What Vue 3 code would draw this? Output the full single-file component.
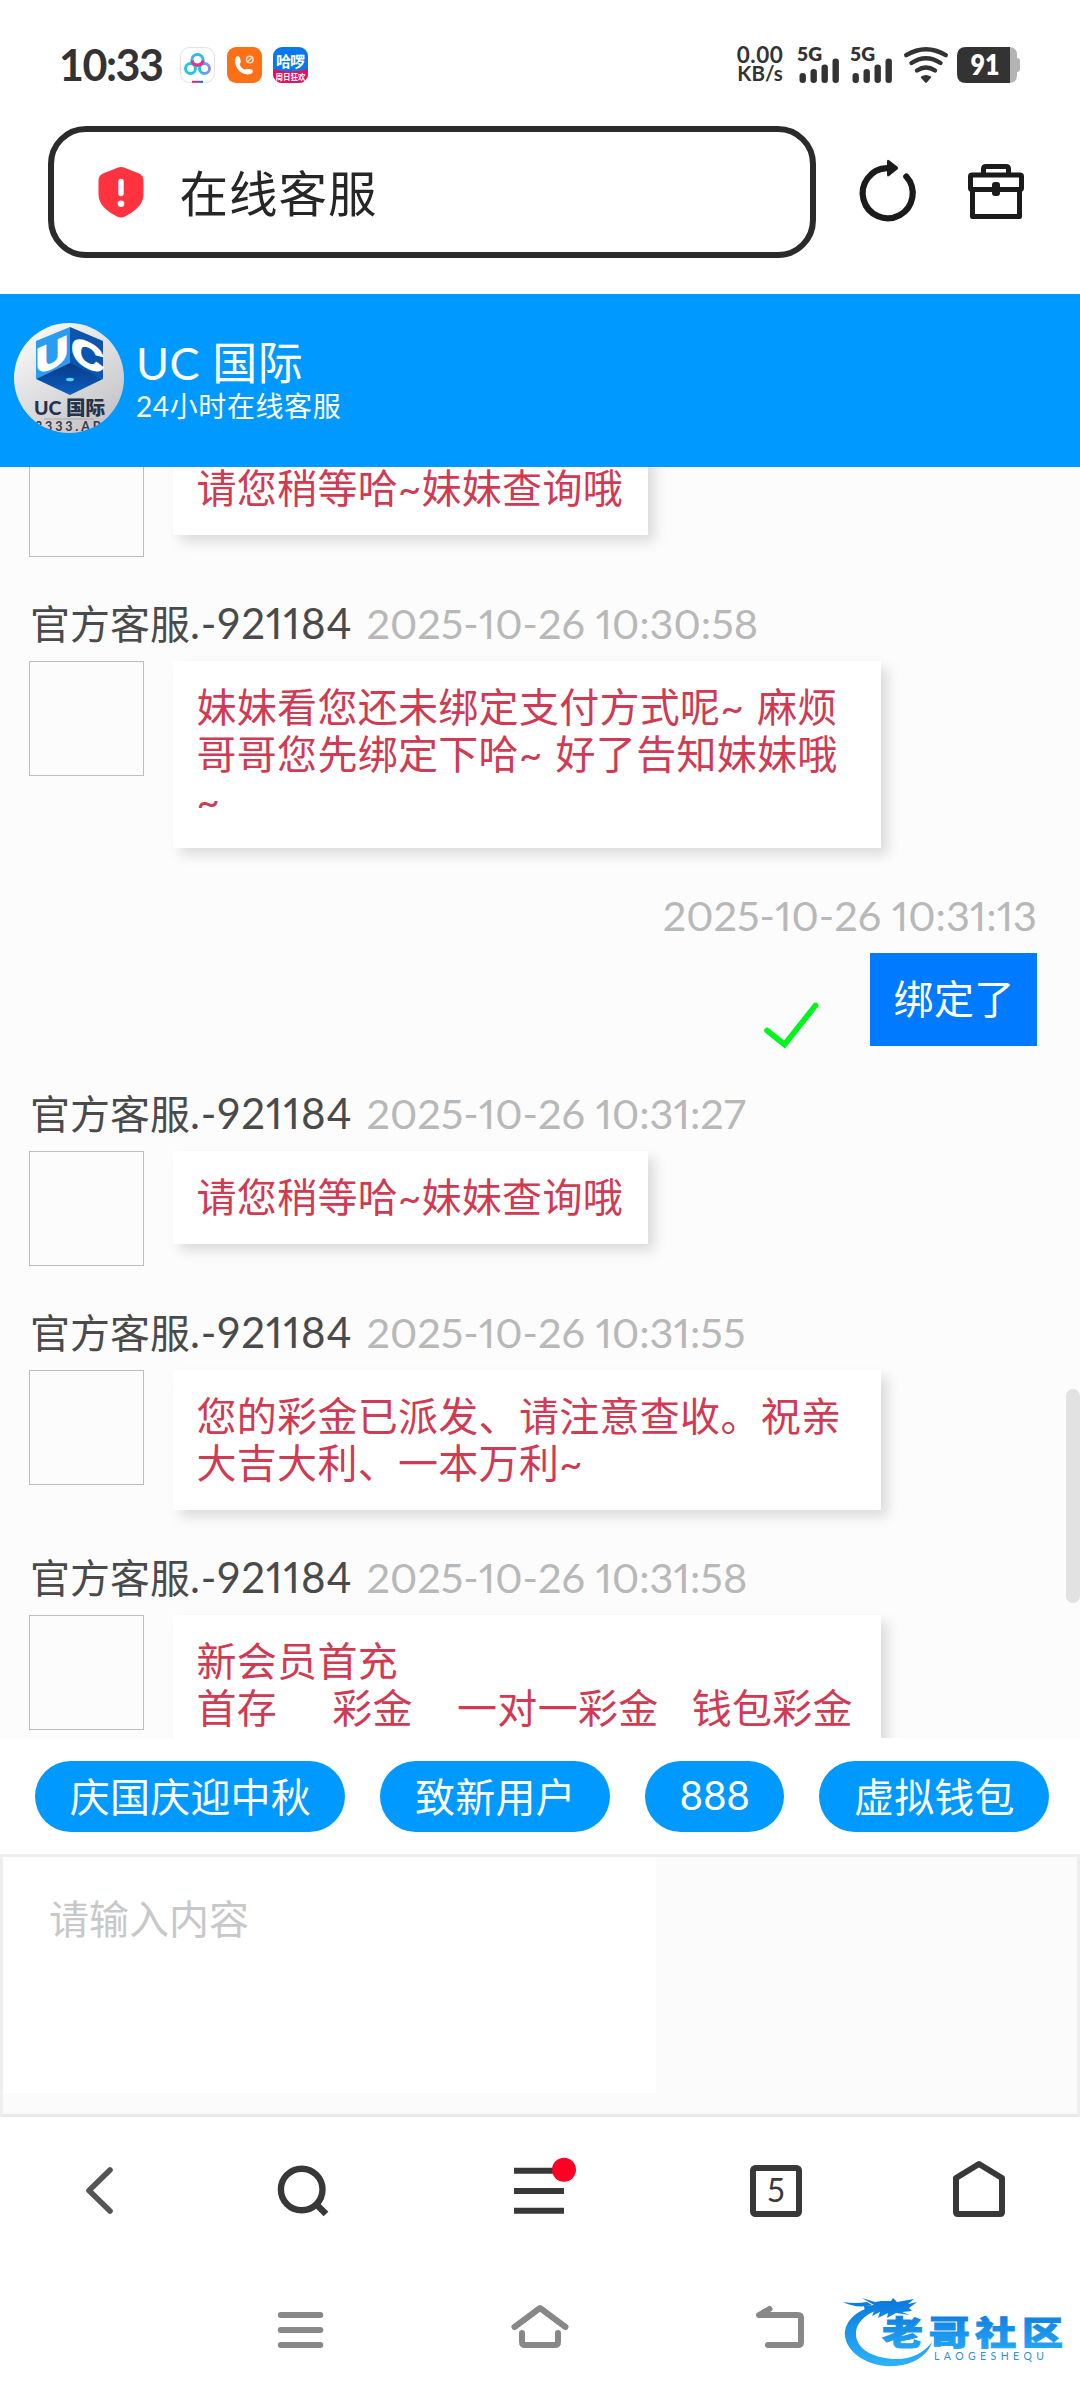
<script setup>
import { ref } from 'vue'

const agent = { title: '官方客服', id: '.-921184' }

const messages = ref([
  { id: 1, from: agent, time: '2025-10-26 10:30:41', text: '请您稍等哈~妹妹查询哦' },
  { id: 2, from: agent, time: '2025-10-26 10:30:58', text: '妹妹看您还未绑定支付方式呢~ 麻烦\n哥哥您先绑定下哈~ 好了告知妹妹哦\n~', wide: true },
  { id: 3, mine: true, time: '2025-10-26 10:31:13', text: '绑定了' },
  { id: 4, from: agent, time: '2025-10-26 10:31:27', text: '请您稍等哈~妹妹查询哦' },
  { id: 5, from: agent, time: '2025-10-26 10:31:55', text: '您的彩金已派发、请注意查收。祝亲\n大吉大利、一本万利~', wide: true },
  { id: 6, from: agent, time: '2025-10-26 10:31:58', text: '新会员首充\n首存     彩金    一对一彩金   钱包彩金', wide: true, columns: true },
])

const quickReplies = ['庆国庆迎中秋', '致新用户', '888', '虚拟钱包']
const draft = ref('')
</script>

<template>
  <div class="phone">
    <!-- status bar -->
    <div class="status">
      <span class="clock">10:33</span>
      <div class="apps">
        <svg width="35" height="36" viewBox="0 0 35 36">
          <defs>
            <linearGradient id="cloud" x1="0" x2="1">
              <stop offset="0" stop-color="#19c3e6" />
              <stop offset="1" stop-color="#8b8fe8" />
            </linearGradient>
          </defs>
          <rect x=".5" y=".5" width="34" height="35" rx="9" fill="#fff" stroke="#e2e2e6" />
          <circle cx="17.500" cy="13" r="5.600" fill="none" stroke="#35b9ea" stroke-width="3" />
          <circle cx="10.500" cy="21.500" r="5" fill="none" stroke="#22c7df" stroke-width="3" />
          <circle cx="24.500" cy="21.500" r="5" fill="none" stroke="url(#cloud)" stroke-width="3" />
          <path d="M12 13.500a5.600 5.600 0 0 0 11 0" fill="none" stroke="#e8308c" stroke-width="3.200" />
          <path d="M12 34.800h6" stroke="#e5255f" stroke-width="2" />
          <path d="M18 34.800h5" stroke="#2468d8" stroke-width="2" />
        </svg>
        <svg width="35" height="36" viewBox="0 0 35 36">
          <rect width="35" height="36" rx="9" fill="#ff6f16" />
          <path d="M8.500 10.500c1.500-2 4-1.500 4.500.5l.8 3.500c.2 1.200-1.200 2-1 3 .6 2.200 2.200 4 4.600 5 1 .4 2-.9 3.200-.7l4 .8c2 .6 1.600 3.600-.8 4.400C16 29.500 6 21.500 8.500 10.500z" fill="#fff" />
          <circle cx="22.800" cy="12.600" r="3.300" fill="none" stroke="#ffe0cc" stroke-width="1.400" />
          <path d="M20.600 14.800l4.400-4.400" stroke="#ffe0cc" stroke-width="1.400" />
        </svg>
        <svg width="35" height="36" viewBox="0 0 35 36">
          <defs>
            <clipPath id="hello"><rect width="35" height="36" rx="9" /></clipPath>
          </defs>
          <g clip-path="url(#hello)">
            <rect width="35" height="36" fill="#0a78ea" />
            <path d="M0 22q17 5 35 0v14H0z" fill="#e80d5e" />
            <text x="3" y="19.500" textLength="29" font-size="15" font-weight="700" fill="#fff">哈啰</text>
            <text x="2.500" y="33" textLength="30" lengthAdjust="spacingAndGlyphs" font-size="8" font-weight="700" fill="#fff">周日狂欢</text>
          </g>
        </svg>
      </div>
      <div class="speed">
        <span>0.00</span>
        <span>KB/s</span>
      </div>
      <svg v-for="n in 2" :key="n" class="signal" width="43" height="36" viewBox="0 0 43 36">
        <text x="-1" y="14" textLength="25" lengthAdjust="spacingAndGlyphs" font-size="19" font-weight="800" fill="#333">5G</text>
        <g fill="#333">
          <rect x="1.500" y="26" width="6.400" height="10" rx="3" />
          <rect x="12.500" y="22" width="6.400" height="14" rx="3" />
          <rect x="23.500" y="17.500" width="6.400" height="18.500" rx="3" />
          <rect x="34.500" y="11.500" width="6.400" height="24.500" rx="3" />
        </g>
      </svg>
      <svg class="wifi" width="44" height="36" viewBox="0 0 44 36">
        <g fill="none" stroke="#333" stroke-width="4.400" stroke-linecap="round">
          <path d="M2.200 8.200Q22-3.800 41.800 8.200" />
          <path d="M7.500 16Q22 6.500 36.500 16" />
          <path d="M13 23.500Q22 17.500 31 23.500" />
        </g>
        <path d="M17 29.500q5-3 10 0 .4 1-.4 1.800L22.800 35.600q-.8.7-1.600 0L17.400 31.300q-.8-.8-.4-1.800z" fill="#333" />
      </svg>
      <svg width="63" height="36" viewBox="0 0 63 36">
        <path d="M50 0h2q8 0 8 8v3q3 0 3 3v8q0 3-3 3v3q0 8-8 8h-2z" fill="#b3b3b3" />
        <path d="M9 0h44v36H9q-9 0-9-9V9q0-9 9-9z" fill="#333" />
        <text x="28" y="28" text-anchor="middle" textLength="29" lengthAdjust="spacingAndGlyphs" font-size="28" font-weight="800" fill="#fff">91</text>
      </svg>
    </div>

    <!-- address bar -->
    <div class="address">
      <div class="box">
        <svg width="48" height="52" viewBox="0 0 48 52">
          <path d="M20.500 1.800q3.500-1.500 7 0L42 7.500q4.500 2 4.500 7V28c0 11-9 17.500-18.500 22.500q-4 2-8 0C10.500 45.500 1.500 39 1.500 28V14.500q0-5 4.500-7z" fill="#ff3340" />
          <path d="M24 15.500v12" stroke="#fff" stroke-width="5.400" stroke-linecap="round" />
          <circle cx="24" cy="37.800" r="3.300" fill="#fff" />
        </svg>
        <span>在线客服</span>
      </div>
      <svg class="reload" width="58" height="64" viewBox="0 0 58 64">
        <path d="M47.300 17.500A25 25 0 1 1 28 9.200" fill="none" stroke="#1b1b1b" stroke-width="6.200" stroke-linecap="round" />
        <path d="M28 2.500q0-2.600 2.200-1.200l8.300 6.500q1.400 1.200 0 2.400l-8.300 6.800q-2.200 1.300-2.200-1.200z" fill="#1b1b1b" />
      </svg>
      <svg width="58" height="58" viewBox="0 0 58 58">
        <g fill="none" stroke="#1b1b1b" stroke-width="5" stroke-linejoin="round">
          <path d="M16.500 11V6q0-2.500 2.500-2.500h20q2.500 0 2.500 2.500v5" />
          <rect x="3.500" y="12" width="51" height="14.500" rx="1.500" />
          <path d="M5.500 27v26.500h47V27" />
        </g>
        <rect x="25" y="19" width="8" height="14" rx="3" fill="#1b1b1b" />
      </svg>
    </div>

    <!-- chat header -->
    <header class="chat-head">
      <svg width="110" height="110" viewBox="0 0 110 110">
        <defs>
          <clipPath id="round"><circle cx="55" cy="55" r="55" /></clipPath>
          <linearGradient id="silver" x1="0" y1="0" x2=".7" y2="1">
            <stop offset="0" stop-color="#fff" />
            <stop offset="1" stop-color="#c4c4c8" />
          </linearGradient>
          <linearGradient id="base" x1="0" y1="0" x2="0" y2="1">
            <stop offset="0" stop-color="#063a86" />
            <stop offset="1" stop-color="#0d5fc0" />
          </linearGradient>
        </defs>
        <g clip-path="url(#round)">
          <rect width="110" height="110" fill="url(#silver)" />
          <path d="M22 18L56 4v38L22 56z" fill="#2a9df2" />
          <path d="M56 4l33 14v38L56 42z" fill="#0a55ad" />
          <path d="M56 40l33 16-33 16-34-16z" fill="url(#base)" />
          <ellipse cx="56" cy="56.500" rx="4" ry="1.800" fill="#5fd0ff" />
          <g class="cube" font-size="36" font-weight="700" fill="#fff" stroke="#fff" stroke-width="2">
            <text transform="matrix(1 -.46 0 1 22 52)" textLength="32" lengthAdjust="spacingAndGlyphs">U</text>
            <text transform="matrix(1 .46 0 1 57.500 37)" textLength="32" lengthAdjust="spacingAndGlyphs">C</text>
          </g>
          <text x="20" y="92" textLength="71" lengthAdjust="spacingAndGlyphs" font-size="19" font-weight="900" fill="#26324a">UC 国际</text>
          <path d="M30 96h50" stroke="#a9a9ad" stroke-width="1" />
          <text x="21" y="108" textLength="76" font-size="12.500" font-weight="700" fill="#333b48">3333.APP</text>
        </g>
      </svg>
      <div class="head-text">
        <h1>UC 国际</h1>
        <p>24小时在线客服</p>
      </div>
    </header>

    <!-- conversation, scrolled part way down -->
    <main class="chat">
      <div class="thread">
        <section v-for="m in messages" :key="m.id" class="msg" :class="{ mine: m.mine }">
          <div class="meta">
            <span v-if="m.from" class="name">{{ m.from.title }}<span class="number">{{ m.from.id }}</span></span>
            <time>{{ m.time }}</time>
          </div>
          <div class="row">
            <div v-if="!m.mine" class="avatar"></div>
            <svg v-else class="check" width="55" height="46" viewBox="0 0 55 46">
              <path d="M3 28.500L20.500 42.500 51.500 3.500" fill="none" stroke="#00f51a" stroke-width="5.600" stroke-linecap="round" />
            </svg>
            <div class="bubble" :class="{ wide: m.wide, columns: m.columns }">{{ m.text }}</div>
          </div>
        </section>
      </div>
      <div class="scrollbar"></div>
    </main>

    <div class="quick">
      <button v-for="q in quickReplies" :key="q">{{ q }}</button>
    </div>

    <div class="editor">
      <textarea v-model="draft" placeholder="请输入内容"></textarea>
    </div>

    <!-- browser toolbar -->
    <nav class="toolbar">
      <svg width="200" height="80" viewBox="0 0 200 80">
        <path d="M110 20L89 40.500 110 61" fill="none" stroke="#555" stroke-width="5.600" stroke-linecap="round" stroke-linejoin="round" />
      </svg>
      <svg width="206" height="80" viewBox="200 0 206 80">
        <circle cx="301.700" cy="39.500" r="20.800" fill="none" stroke="#383838" stroke-width="6.400" />
        <path d="M316.500 54.500L326 64" stroke="#383838" stroke-width="6.600" />
      </svg>
      <svg width="264" height="80" viewBox="406 0 264 80">
        <path d="M514 20.800h50M514 41h50M514 60.800h50" stroke="#383838" stroke-width="6" />
        <circle cx="564" cy="19.800" r="12" fill="#ff0024" />
      </svg>
      <svg width="206" height="80" viewBox="670 0 206 80">
        <rect x="753" y="18" width="46" height="46" rx="2.500" fill="none" stroke="#383838" stroke-width="6" />
        <text x="776" y="51.500" text-anchor="middle" font-size="32" fill="#383838">5</text>
      </svg>
      <svg width="204" height="80" viewBox="876 0 204 80">
        <path d="M956 28L979 14l23 14v34q0 2-2 2h-42q-2 0-2-2z" fill="none" stroke="#383838" stroke-width="6" stroke-linejoin="round" />
      </svg>
    </nav>

    <!-- android navigation keys -->
    <nav class="keys">
      <svg width="420" height="60" viewBox="0 0 420 60">
        <path d="M280.800 20h39.500M280.800 35h39.500M280.800 50h39.500" stroke="#888" stroke-width="6" stroke-linecap="round" />
      </svg>
      <svg width="240" height="60" viewBox="420 0 240 60">
        <g fill="none" stroke="#888" stroke-width="6" stroke-linecap="round" stroke-linejoin="round">
          <path d="M514.500 32L540 13l25.500 19" />
          <path d="M522 38v9q0 3 3 3h30q3 0 3-3v-9" />
        </g>
      </svg>
      <svg width="160" height="60" viewBox="660 0 160 60">
        <path d="M769.500 14L759 20h39q3 0 3 3v24q0 3-3 3h-30" fill="none" stroke="#888" stroke-width="6" stroke-linecap="round" stroke-linejoin="round" />
      </svg>
      <svg class="mark" width="234" height="90" viewBox="0 0 234 90">
        <defs>
          <linearGradient id="wave" x1="0" y1="10" x2="0" y2="80" gradientUnits="userSpaceOnUse">
            <stop offset="0" stop-color="#0a76dc" />
            <stop offset="1" stop-color="#2cb4fb" />
          </linearGradient>
        </defs>
        <g fill="url(#wave)">
          <path d="M34 20C16 25 7 37 8 49c2 18 26 32 49 30 20-1 34-11 38-24-8 11-21 17-35 17-22 0-40-9-41-24-1-10 7-20 22-25z" />
          <path d="M27 19l10-1-12-7 13 4 6-1 10 0 2-3 4 4 17-3-6 5 9-2-8 6 3 3-10 1 8 3-14-2-9 5 1-5-10 5 2-6-8 4 2-5-9 1z" />
          <path d="M6 15q12 2 24 0l5 3q-15 4-29-3z" />
          <text x="45" y="58.500" textLength="181" font-size="41" font-weight="900" stroke="url(#wave)" stroke-width="1.200" transform="translate(0 11) scale(1 .8)">老哥社区</text>
        </g>
        <text x="97" y="73" textLength="110" font-size="10.500" fill="#2f8fdc">LAOGESHEQU</text>
      </svg>
    </nav>
  </div>
</template>

<style>
body {
  background: #fff;
}
</style>

<style scoped>
.phone {
  width: 1080px;
  height: 2392px;
  overflow: hidden;
  display: flex;
  flex-direction: column;
  background: #fff;
  font-family: Lato, 'Noto Sans CJK SC', sans-serif;
}
svg { display: block; flex: none; overflow: visible; }

/* status bar */
.status {
  height: 126px;
  padding: 47px 60px 0 59px;
  box-sizing: border-box;
  display: flex;
  align-items: flex-start;
}
.clock {
  width: 121px;
  font-size: 43px;
  line-height: 36px;
  font-weight: 700;
  letter-spacing: -1.5px;
  color: #333;
}
.apps { display: flex; gap: 11.5px; }
.speed {
  margin-left: auto;
  width: 50px;
  display: flex;
  flex-direction: column;
  align-items: center;
  font-size: 20.5px;
  line-height: 21px;
  font-weight: 700;
  color: #333;
}
.speed span:first-child { font-size: 22.5px; line-height: 16px; letter-spacing: .5px; }
.signal { margin-left: 13px; }
.signal + .signal { margin-left: 10px; }
.wifi { margin: 0 9px 0 10px; }

/* address bar */
.address {
  height: 168px;
  padding: 0 54px 0 48px;
  display: flex;
  align-items: flex-start;
}
.box {
  width: 768px;
  height: 132px;
  padding-left: 43px;
  box-sizing: border-box;
  border: 6px solid #2b2b2b;
  border-radius: 38px;
  display: flex;
  align-items: center;
  font-size: 48.5px;
  letter-spacing: 1px;
  color: #262626;
}
.box span { margin: -3px 0 0 34.5px; }
.reload { margin: 32.5px 50px 0 43px; }
.reload + svg { margin-top: 37px; }

/* chat header */
.chat-head {
  height: 173px;
  padding: 0 14px 6px;
  box-sizing: border-box;
  display: flex;
  align-items: center;
  background: #0099ff;
  color: #fff;
}
.cube { font-family: 'Liberation Sans', sans-serif; }
.head-text { margin: 6px 0 0 12px; }
.head-text h1 {
  margin: 0;
  font-size: 45px;
  line-height: 50px;
  font-weight: 400;
  letter-spacing: .5px;
}
.head-text p {
  margin: 0;
  font-size: 28px;
  line-height: 36px;
  letter-spacing: .6px;
}

/* conversation */
.chat {
  position: relative;
  height: 1271px;
  overflow: hidden;
  background: #fcfcfc;
}
.thread {
  margin-top: -86px;
  padding: 0 43px 0 29px;
}
.msg { margin-bottom: 44px; }
.meta {
  height: 47px;
  margin-bottom: 14px;
  padding-left: 1px;
  display: flex;
  align-items: baseline;
  gap: 14px;
  font-size: 40px;
  line-height: 47px;
  font-variant-numeric: proportional-nums;
  white-space: nowrap;
}
.name { color: #4a4a4a; }
.number { font-size: 42px; line-height: 1; letter-spacing: .9px; }
.meta time { font-size: 41.5px; color: #b8b8b8; }
.row { display: flex; align-items: flex-start; }
.avatar {
  width: 115px;
  height: 115px;
  margin-bottom: -1px;
  box-sizing: border-box;
  border: 1px solid #bdbdbd;
}
.bubble {
  margin-left: 29px;
  padding: 22.5px 24.5px 23.5px 23.5px;
  background: #fff;
  color: #d03a52;
  box-shadow: 7px 7px 12px rgba(0, 0, 0, .13);
  font-size: 40px;
  line-height: 47px;
  letter-spacing: .3px;
  word-spacing: 2.6px;
  white-space: pre;
}
.bubble.wide { width: 660px; }
.bubble.columns { word-spacing: .5px; }
.mine .meta, .mine .row { justify-content: flex-end; }
.mine .bubble {
  margin-left: 51px;
  background: #007aff;
  color: #fff;
  box-shadow: none;
  padding-right: 22.5px;
}
.check { margin: 49px 0 -10px; }
.scrollbar {
  position: absolute;
  top: 922px;
  right: 0;
  width: 14px;
  height: 214px;
  border-radius: 7px;
  background: #e2e2e2;
}

/* quick replies */
.quick {
  height: 116px;
  padding-left: 35px;
  display: flex;
  align-items: center;
  gap: 35px;
}
.quick button {
  height: 71px;
  padding: 0 34.2px 2px 34.8px;
  border: 0;
  border-radius: 36px;
  background: #0099ff;
  color: #fff;
  font: inherit;
  font-size: 40px;
  letter-spacing: .2px;
  white-space: nowrap;
}

.editor {
  height: 263px;
  box-sizing: border-box;
  border: 3px solid #eee;
  border-bottom-color: #e9e9e9;
  background: #fbfbfb;
}
.editor textarea {
  display: block;
  width: 653px;
  height: 236px;
  padding: 38.5px 46px;
  box-sizing: border-box;
  border: 0;
  resize: none;
  outline: none;
  background: #fff;
  font: inherit;
  font-size: 40px;
  line-height: 47px;
}
.editor textarea::placeholder { color: #c8c8c8; opacity: 1; }

.toolbar {
  display: flex;
  padding-top: 33px;
}
.keys {
  display: flex;
  padding-top: 64.5px;
}
.keys .mark { margin: -8px 0 0 17px; }
</style>
